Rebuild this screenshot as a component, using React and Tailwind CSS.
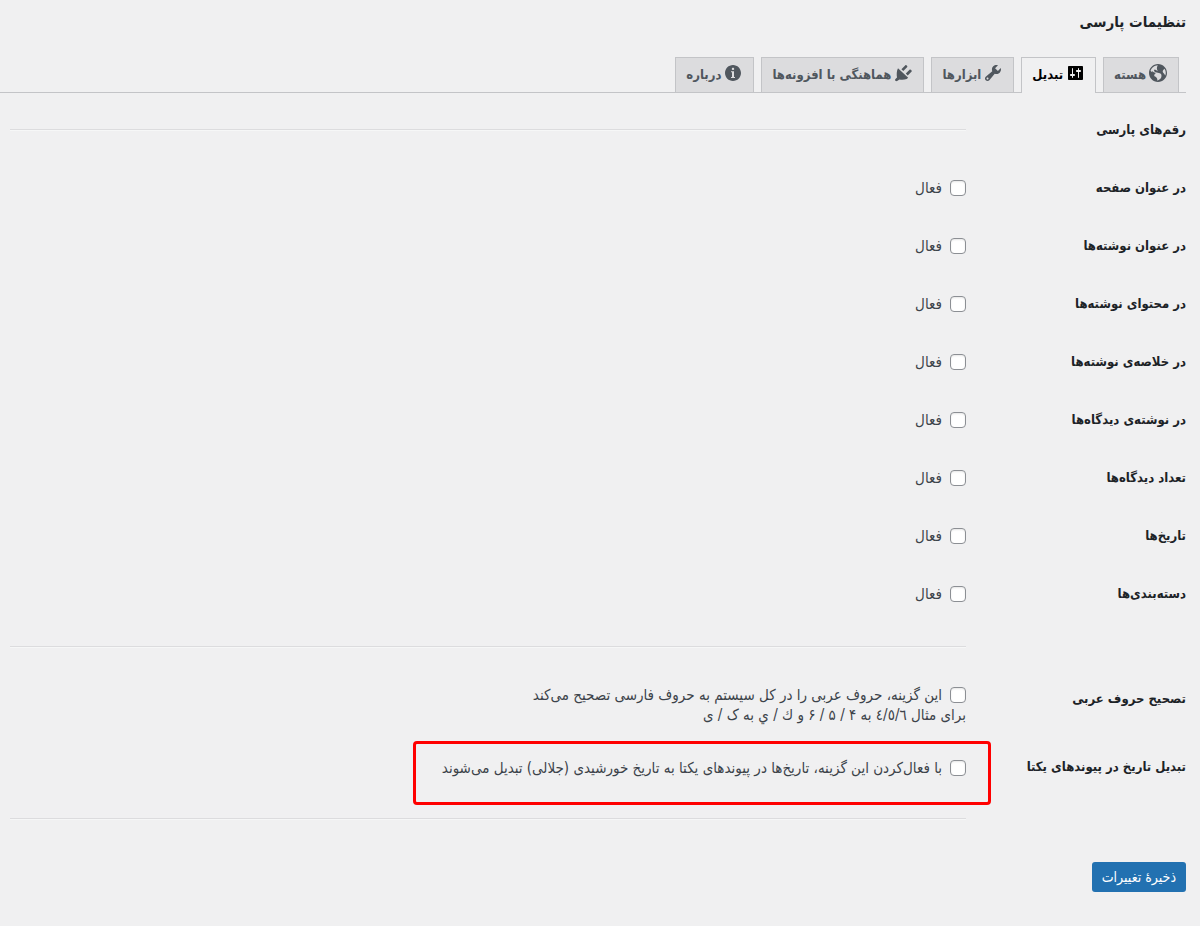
import React, { useState } from 'react';

const ICONS = {
  site: 'M10 1C5.03 1 1 5.03 1 10c0 4.97 4.03 9 9 9 4.97 0 9-4.03 9-9 0-4.97-4.03-9-9-9zm3.46 11.95c0 1.47-.8 3.3-4.06 4.7.3-4.17-2.52-3.69-3.2-5 .126-1.1.804-2.063 1.8-2.55-1.552-.266-3-.96-4.18-2 .05.47.28.904.64 1.21-.782-.295-1.458-.817-1.94-1.5.977-3.225 3.883-5.482 7.25-5.63-.84 1.38-1.5 4.13 0 5.57C8.23 8 7.26 6 6.41 6.79c-1.13 1.06.33 2.51 3.42 3.08 3.29.59 3.66 1.58 3.63 3.08zm1.34-4c-.32-1.11.62-2.23 1.69-3.14 1.356 1.955 1.67 4.45.84 6.68-.77-1.89-2.17-2.32-2.53-3.57z',
  settings: 'M18 16V4c0-.55-.45-1-1-1H4c-.55 0-1 .45-1 1v12c0 .55.45 1 1 1h13c.55 0 1-.45 1-1zM8 11h1c.55 0 1 .45 1 1s-.45 1-1 1H8v1.5c0 .28-.22.5-.5.5s-.5-.22-.5-.5V13H6c-.55 0-1-.45-1-1s.45-1 1-1h1V5.5c0-.28.22-.5.5-.5s.5.22.5.5V11zm5-2h-1c-.55 0-1-.45-1-1s.45-1 1-1h1V5.5c0-.28.22-.5.5-.5s.5.22.5.5V7h1c.55 0 1 .45 1 1s-.45 1-1 1h-1v5.5c0 .28-.22.5-.5.5s-.5-.22-.5-.5V9z',
  tools: 'M16.68 9.77c-1.34 1.34-3.3 1.67-4.95.99l-5.41 6.52c-.99.99-2.59.99-3.58 0s-.99-2.59 0-3.57l6.52-5.42c-.68-1.65-.35-3.61.99-4.95 1.28-1.28 3.12-1.62 4.72-1.06l-2.89 2.89 2.82 2.82 2.86-2.87c.53 1.58.18 3.39-1.08 4.65zM3.81 16.21c.4.39 1.04.39 1.43 0 .4-.4.4-1.04 0-1.43-.39-.4-1.03-.4-1.43 0-.39.39-.39 1.03 0 1.43z',
  plugins: 'M12.4 2.2c.9-.5 2.3.9 1.9 1.8l-4 4-1.9-1.8zM16.8 6.6c.9-.5 2.3.9 1.9 1.8l-4 4-1.9-1.8zM5 5.2l10.2 9.6-1.5 1.1c-2.2.8-4.8.9-7.2.5L3.7 18.2 2 17.6l.2-1.4L4 14.6c-.5-3.2-.4-6.8 1-9.4z',
  info: 'M10 2c4.42 0 8 3.58 8 8s-3.58 8-8 8-8-3.58-8-8 3.58-8 8-8zm1.2 3.9c0-.65-.55-1.2-1.2-1.2s-1.2.55-1.2 1.2.55 1.2 1.2 1.2 1.2-.55 1.2-1.2zM12 15v-1h-1V8.3H8v1h1V14H8v1z',
};

const tabs = [
  { id: 'core', label: 'هسته', icon: 'site' },
  { id: 'conversion', label: 'تبدیل', icon: 'settings' },
  { id: 'tools', label: 'ابزارها', icon: 'tools' },
  { id: 'plugins', label: 'هماهنگی با افزونه‌ها', icon: 'plugins' },
  { id: 'about', label: 'درباره', icon: 'info' },
];

const digitFields = [
  { id: 'page_title', title: 'در عنوان صفحه' },
  { id: 'post_title', title: 'در عنوان نوشته‌ها' },
  { id: 'post_content', title: 'در محتوای نوشته‌ها' },
  { id: 'post_excerpt', title: 'در خلاصه‌ی نوشته‌ها' },
  { id: 'comment_text', title: 'در نوشته‌ی دیدگاه‌ها' },
  { id: 'comment_count', title: 'تعداد دیدگاه‌ها' },
  { id: 'dates', title: 'تاریخ‌ها' },
  { id: 'categories', title: 'دسته‌بندی‌ها' },
];

const TabIcon = ({ name }) => (
  <svg viewBox="0 0 20 20" className="mb-1 size-5 shrink-0 fill-current" aria-hidden="true">
    <path d={ICONS[name]} />
  </svg>
);

const Divider = () => <hr className="border-t border-b border-t-[#dcdcde] border-b-[#f6f7f7]" />;

const Checkbox = ({ id, checked, onChange, children }) => (
  <label htmlFor={id} className="flex items-center gap-2">
    <input
      type="checkbox"
      id={id}
      name={id}
      checked={!!checked}
      onChange={onChange}
      className="size-4 shrink-0 appearance-none rounded-sm border border-[#8c8f94] bg-white shadow-[inset_0_1px_2px_rgba(0,0,0,0.1)] checked:bg-[#2271b1]"
    />
    <span>{children}</span>
  </label>
);

const RowTitle = ({ children }) => (
  <div className="w-[220px] shrink-0 text-[13px] leading-5 font-bold text-[#1d2327]">{children}</div>
);

// One settings row: title on the right, field on the left
const Row = ({ title, children }) => (
  <div className="flex min-h-[58px] items-center">
    <RowTitle>{title}</RowTitle>
    <div className="min-w-0 flex-1">{children}</div>
  </div>
);

const App = () => {
  const [activeTab, setActiveTab] = useState('conversion');
  const [values, setValues] = useState({});

  const handleChange = (e) => {
    const { name, checked } = e.target;
    setValues(prev => ({ ...prev, [name]: checked }));
  };

  const handleSubmit = (e) => {
    e.preventDefault();
  };

  return (
    <div
      dir="rtl"
      lang="fa"
      className="min-h-screen bg-[#f0f0f1] pr-[14px] font-['DejaVu_Sans_Condensed','DejaVu_Sans',sans-serif] text-[15px] leading-5 text-[#3c434a]"
    >
      <h1 className="pt-2 text-[15px] leading-7 font-bold text-[#1d2327]">تنظیمات پارسی</h1>

      {/* Tabs */}
      <nav className="mt-[21px] flex gap-[7px] border-b border-[#c3c4c7] pr-[7px] text-[13px] font-bold">
        {tabs.map(tab => (
          <a
            key={tab.id}
            href={`#${tab.id}`}
            onClick={() => setActiveTab(tab.id)}
            className={
              activeTab === tab.id
                ? '-mb-px flex h-9 items-center gap-0.5 border border-b-0 border-[#c3c4c7] bg-[#f0f0f1] px-[10px] pb-px text-black'
                : 'flex h-[35px] items-center gap-0.5 border border-b-0 border-[#c3c4c7] bg-[#dcdcde] px-[10px] text-[#50575e]'
            }
          >
            <TabIcon name={tab.icon} />
            {tab.label}
          </a>
        ))}
      </nav>

      <form onSubmit={handleSubmit} className="mt-2 pl-[10px]">
        <Row title="رقم‌های پارسی">
          <Divider />
        </Row>
        {digitFields.map(field => (
          <Row key={field.id} title={field.title}>
            <Checkbox id={field.id} checked={values[field.id]} onChange={handleChange}>فعال</Checkbox>
          </Row>
        ))}
        <div className="py-[23px] pr-[220px]">
          <Divider />
        </div>

        <div className="flex pt-[14px] pb-4">
          <div className="pt-1">
            <RowTitle>تصحیح حروف عربی</RowTitle>
          </div>
          <div className="min-w-0 flex-1">
            <Checkbox id="arabic" checked={values.arabic} onChange={handleChange}>
              این گزینه، حروف عربی را در کل سیستم به حروف فارسی تصحیح می‌کند
            </Checkbox>
            <p>برای مثال ٤/٥/٦ به ۴ / ۵ / ۶ و ك / ي به ک / ی</p>
          </div>
        </div>

        <div className="flex">
          <div className="pt-4">
            <RowTitle>تبدیل تاریخ در پیوندهای یکتا</RowTitle>
          </div>
          <div className="-mr-[25px] h-16 w-[578px] rounded-sm border-3 border-[#ff0000] pt-[14px] pr-[22px]">
            <Checkbox id="permalink" checked={values.permalink} onChange={handleChange}>
              با فعال‌کردن این گزینه، تاریخ‌ها در پیوندهای یکتا به تاریخ خورشیدی (جلالی) تبدیل می‌شوند
            </Checkbox>
          </div>
        </div>

        <div className="py-[13px] pr-[220px]">
          <Divider />
        </div>

        <button type="submit" className="mt-[29px] h-[30px] rounded-[3px] bg-[#2271b1] px-[10px] text-sm text-white">
          ذخیرهٔ تغییرات
        </button>
      </form>
    </div>
  );
};

export default App;
